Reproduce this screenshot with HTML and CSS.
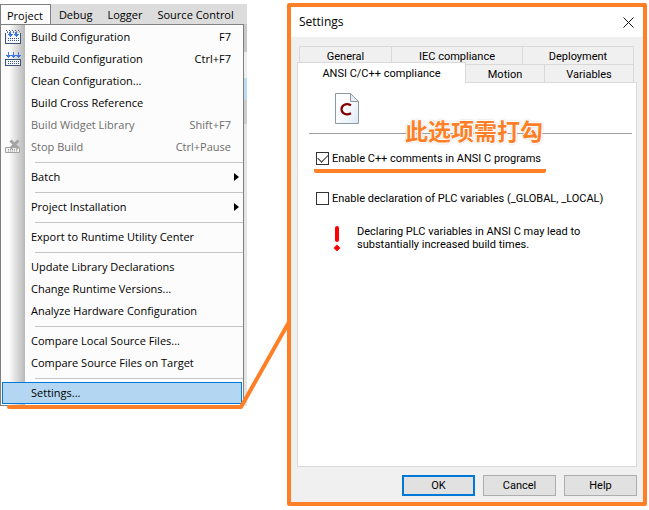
FILE: index.html
```html
<!DOCTYPE html>
<html lang="en">
<head>
<meta charset="utf-8">
<title>Project settings</title>
<link rel="stylesheet" href="styles.css">
</head>
<body>
<main class="guide">
  <section class="app">
    <nav class="menubar">
      <button class="menubar-item open">Project</button>
      <button class="menubar-item">Debug</button>
      <button class="menubar-item">Logger</button>
      <button class="menubar-item">Source Control</button>
    </nav>
    <div class="menu-area">
      <div class="menu">
        <button class="item">
          <svg class="icon" viewBox="0 0 16 16" shape-rendering="crispEdges">
            <path d="M1 1.500h14M2 3.500h12" stroke="#4c6484" stroke-dasharray="1 2"/>
            <path d="M2 2.500h13" stroke="#8898ac" stroke-dasharray="1 2"/>
            <path d="M.5 4v10.500h15V4" fill="#f4f7fc" stroke="#3c5478"/>
            <path d="M3 9.500h11M3 11.500h11" stroke="#3c5478" stroke-dasharray="1 1"/>
            <path d="M5 3v3M11 3v3" stroke="#3c78e0" stroke-width="2"/>
            <path d="M2 5h6L5 8zM8 5h6l-3 3z" fill="#3c78e0"/>
          </svg>
          <span>Build Configuration</span><kbd>F7</kbd>
        </button>
        <button class="item">
          <svg class="icon" viewBox="0 0 16 16" shape-rendering="crispEdges">
            <path d="M.5 8.500h15v6H.5z" fill="#f4f7fc" stroke="#3c5478"/>
            <path d="M3 10.500h11M3 12.500h11" stroke="#3c5478" stroke-dasharray="1 1"/>
            <path d="M3.500 1v4M8.500 1v4M13.500 1v4" stroke="#3c78e0"/>
            <path d="M1 4h5L3.500 7zM6 4h5L8.500 7zM11 4h5l-2.500 3z" fill="#3c78e0"/>
          </svg>
          <span>Rebuild Configuration</span><kbd>Ctrl+F7</kbd>
        </button>
        <button class="item"><i class="icon"></i><span>Clean Configuration...</span></button>
        <button class="item"><i class="icon"></i><span>Build Cross Reference</span></button>
        <button class="item" disabled><i class="icon"></i><span>Build Widget Library</span><kbd>Shift+F7</kbd></button>
        <button class="item" disabled>
          <svg class="icon" viewBox="0 0 16 16">
            <path d="M.5 8.500h14v5H.5z" fill="#f2f2f2" stroke="#a2a2a2"/>
            <path d="M3 10.500h10M3 12h10" stroke="#999" stroke-dasharray="1 1"/>
            <path d="M5.500 1.500l8 8M13.500 1.500l-8 8" stroke="#a4a4a4" stroke-width="3"/>
          </svg>
          <span>Stop Build</span><kbd>Ctrl+Pause</kbd>
        </button>
        <hr>
        <button class="item"><i class="icon"></i><span>Batch</span><i class="arrow"></i></button>
        <hr>
        <button class="item"><i class="icon"></i><span>Project Installation</span><i class="arrow"></i></button>
        <hr>
        <button class="item"><i class="icon"></i><span>Export to Runtime Utility Center</span></button>
        <hr>
        <button class="item"><i class="icon"></i><span>Update Library Declarations</span></button>
        <button class="item"><i class="icon"></i><span>Change Runtime Versions...</span></button>
        <button class="item"><i class="icon"></i><span>Analyze Hardware Configuration</span></button>
        <hr>
        <button class="item"><i class="icon"></i><span>Compare Local Source Files...</span></button>
        <button class="item"><i class="icon"></i><span>Compare Source Files on Target</span></button>
        <hr>
        <button class="item selected"><i class="icon"></i><span>Settings...</span></button>
      </div>
    </div>
    <svg class="connector" viewBox="0 0 290 92">
      <path d="M9 89H241L289 4" fill="none" stroke="#ff7f27" stroke-width="4" stroke-linecap="round" stroke-linejoin="round"/>
    </svg>
  </section>

  <section class="dialog" role="dialog" aria-labelledby="dialog-title">
    <header class="titlebar">
      <h1 id="dialog-title">Settings</h1>
      <button class="close" aria-label="Close">
        <svg viewBox="0 0 11 11"><path d="M.5.5l10 10M10.500.5l-10 10" stroke="#111" fill="none"/></svg>
      </button>
    </header>
    <div class="content">
      <div class="tabs" role="tablist">
        <div class="tab-row back">
          <button class="tab" role="tab">General</button>
          <button class="tab" role="tab">IEC compliance</button>
          <button class="tab" role="tab">Deployment</button>
        </div>
        <div class="tab-row front">
          <button class="tab active" role="tab" aria-selected="true">ANSI C/C++ compliance</button>
          <button class="tab" role="tab">Motion</button>
          <button class="tab" role="tab">Variables</button>
        </div>
      </div>
      <div class="panel" role="tabpanel">
        <div class="panel-head">
          <svg class="file" viewBox="0 0 26 32">
            <defs><linearGradient id="paper" x1="0" y1="0" x2="1" y2="1"><stop offset="0.4" stop-color="#fff"/><stop offset="1" stop-color="#dce8f6"/></linearGradient></defs>
            <path d="M1.500.5h15l8 8v22h-23z" fill="url(#paper)" stroke="#8c979f"/>
            <path d="M16.500.5v8h8z" fill="#e6edf5" stroke="#8c979f"/>
            <path d="M17 12.200C12 9.600 7.500 12 7.500 16.200s4.500 6.600 9.500 4" fill="none" stroke="#850000" stroke-width="2.200"/>
          </svg>
          <strong class="note" lang="zh">此选项需打勾</strong>
        </div>
        <label class="check marked"><input type="checkbox" checked><span>Enable C++ comments in ANSI C programs</span></label>
        <label class="check"><input type="checkbox"><span>Enable declaration of PLC variables (_GLOBAL, _LOCAL)</span></label>
        <div class="warning">
          <svg viewBox="0 0 8 26"><path d="M4 3v12" stroke="#f00" stroke-width="4" stroke-linecap="round"/><path d="M4 21l2 2-2 2-2-2z" fill="#f00" stroke="#f00" stroke-width="2"/></svg>
          <p>Declaring PLC variables in ANSI C may lead to substantially increased build times.</p>
        </div>
      </div>
      <footer class="actions">
        <button class="action default">OK</button>
        <button class="action">Cancel</button>
        <button class="action">Help</button>
      </footer>
    </div>
  </section>
</main>
</body>
</html>
```
FILE: styles.css
```css
* { box-sizing: border-box; }

body {
  margin: 0;
  background: #fff;
  color: #000;
}

button {
  margin: 0;
  padding: 0;
  border: 0;
  background: none;
  color: inherit;
  font: inherit;
}

.guide {
  display: flex;
  align-items: flex-start;
  gap: 40px;
  padding: 3px 2px 4px 0;
}

/* Application menu */
.app {
  position: relative;
  flex: 0 0 247px;
  padding-top: 1px;
  font: 11px/20px "Open Sans", "Noto Sans", sans-serif;
}

.menubar {
  display: flex;
  height: 20px;
  background: #dcdcdc;
}

.menubar-item {
  flex: none;
  padding: 0 7px 0 8px;
  line-height: 22px;
}

.menubar-item.open {
  padding: 0 7px 0 6px;
  border: 1px solid #808080;
  border-bottom: 0;
  background: #fcfcfc;
}

.menu-area {
  padding-right: 3px;
  background: linear-gradient(#c8c8c8 0 28px, #eee 28px 54px, #bcdcf4 54px 76px, #ccc 76px 100px, #e4e4e4 100px);
}

.menu {
  padding: 1px 0 1px 1px;
  border: 1px solid #808080;
  background: linear-gradient(90deg, #fcfcfc 8px, #b8b8b8 24px, #fcfcfc 24px);
}

.item {
  display: flex;
  align-items: center;
  width: 100%;
  height: 22px;
  padding: 0 12px 0 3px;
  line-height: 22px;
  text-align: left;
}

.item:disabled { color: #6d6d6d; }

.item.selected {
  width: calc(100% - 1px);
  padding-left: 2px;
  border: 1px solid #0078d7;
  background: #b3d7f3;
}

.icon {
  flex: none;
  width: 16px;
  height: 16px;
  margin-right: 10px;
}

.item kbd {
  margin-left: auto;
  font: inherit;
}

.arrow {
  margin: 0 -8px 0 auto;
  border: 4px solid transparent;
  border-left: 5px solid #000;
  border-right: 0;
}

.menu hr {
  height: 1px;
  margin: 4px 0 3px 33px;
  border: 0;
  background: #c5c5c5;
}

.connector {
  position: absolute;
  left: 0;
  bottom: -4px;
  z-index: 1;
  width: 290px;
  height: 92px;
  pointer-events: none;
}

/* Settings dialog */
.dialog {
  flex: 1;
  display: flex;
  flex-direction: column;
  border: 4px solid #ff7f27;
  border-radius: 2px;
  background: #f0f0f0;
  font: 11px/13px Roboto, "Liberation Sans", sans-serif;
}

.titlebar {
  display: flex;
  justify-content: space-between;
  align-items: center;
  height: 30px;
  padding: 0 9px 0 8px;
  background: #fff;
}

.titlebar h1 {
  margin: 0;
  font: 12px/16px "Open Sans", "Noto Sans", sans-serif;
}

.close,
.close svg {
  display: block;
  width: 11px;
  height: 11px;
}

.content { padding: 9px 6px 6px; }

.tab-row { display: grid; }

.tab-row.back {
  grid-template-columns: 93fr 131fr 111fr;
  padding: 0 3px 0 2px;
}

.tab-row.front {
  grid-template-columns: 169fr 79fr 89fr;
  padding-right: 3px;
}

.tab {
  height: 18px;
  padding-top: 1px;
  border: 1px solid #d9d9d9;
  border-bottom: 0;
  border-left-width: 0;
}

.tab-row.back .tab:first-child { border-left-width: 1px; }

.tab.active {
  position: relative;
  height: 21px;
  margin: -2px 0 -1px;
  padding-top: 0;
  border-left-width: 1px;
  background: #fff;
}

.panel {
  min-height: 385px;
  padding: 10px 4px 10px 11px;
  border: 1px solid #d9d9d9;
  background: #fff;
}

.panel-head {
  display: flex;
  align-items: flex-start;
  height: 41px;
  padding-left: 25px;
  border-bottom: 1px solid #a0a0a0;
}

.file {
  width: 26px;
  height: 32px;
}

.note {
  margin: 23px 0 0 45px;
  color: #ff7f27;
  font: bold 23px/28px "Noto Sans CJK SC", sans-serif;
  text-shadow: -1px 0 #fff, 1px 0 #fff, 0 -1px #fff, 0 1px #fff, 0 0 2px #fff, 0 0 3px #999;
}

.check {
  display: flex;
  align-items: center;
  gap: 3px;
  width: fit-content;
  height: 22px;
  margin: 14px 0 0 5px;
  padding: 0 5px 0 2px;
}

.check.marked {
  height: 26px;
  margin-top: 13px;
  border-bottom: 4px solid #ff7f27;
  border-radius: 2px;
}

.check input {
  flex: none;
  appearance: none;
  width: 13px;
  height: 13px;
  margin: 0;
  border: 1px solid #333;
  background: #fff;
}

.check input:checked::before {
  content: "";
  display: block;
  width: 9px;
  height: 5px;
  margin: 1px;
  border: solid #333;
  border-width: 0 0 1px 1px;
  transform: rotate(-45deg);
}

.warning {
  display: flex;
  gap: 16px;
  margin: 16px 0 0 24px;
}

.warning svg {
  flex: none;
  width: 8px;
  height: 26px;
}

.warning p {
  max-width: 232px;
  margin: 0;
}

.actions {
  display: flex;
  justify-content: flex-end;
  gap: 8px;
  padding-top: 8px;
}

.action {
  width: 73px;
  height: 21px;
  border: 1px solid #adadad;
  background: #e1e1e1;
}

.action.default { border: 2px solid #0078d7; }
```
